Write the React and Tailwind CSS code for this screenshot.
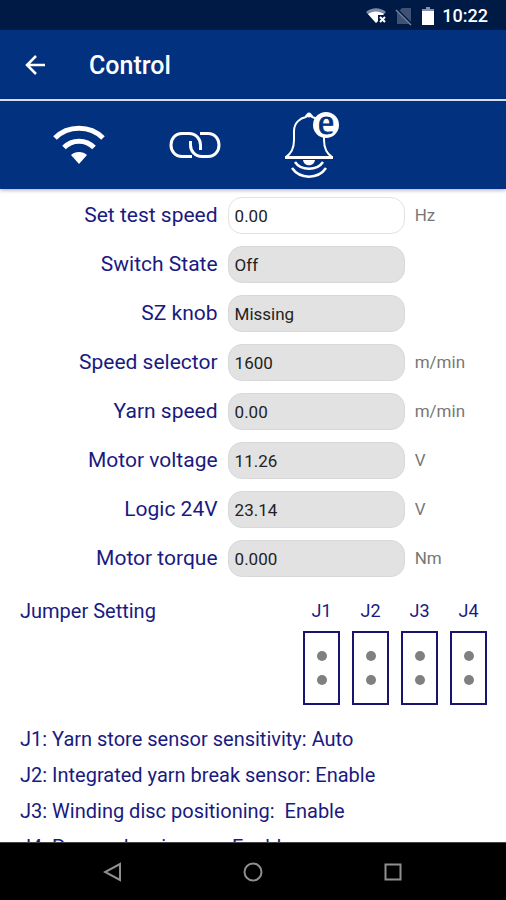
import { useState } from 'react';

const readings = [
  { id: 'switch-state', label: 'Switch State', value: 'Off' },
  { id: 'sz-knob', label: 'SZ knob', value: 'Missing' },
  { id: 'speed-selector', label: 'Speed selector', value: '1600', unit: 'm/min' },
  { id: 'yarn-speed', label: 'Yarn speed', value: '0.00', unit: 'm/min' },
  { id: 'motor-voltage', label: 'Motor voltage', value: '11.26', unit: 'V' },
  { id: 'logic-24v', label: 'Logic 24V', value: '23.14', unit: 'V' },
  { id: 'motor-torque', label: 'Motor torque', value: '0.000', unit: 'Nm' },
];

const jumpers = ['J1', 'J2', 'J3', 'J4'];

const jumperNotes = [
  'J1: Yarn store sensor sensitivity: Auto',
  'J2: Integrated yarn break sensor: Enable',
  'J3: Winding disc positioning:  Enable',
  'J4: Power cleaning run: Enable',
];

function StatusBar() {
  return (
    <div className="flex h-[30px] shrink-0 items-center justify-end bg-[#001a46] pt-0.5 pr-[18px] text-white">
      <svg className="mr-2 h-5 w-5" viewBox="0 0 20 20">
        <path d="M0 6C6 1 14 1 20 6L17 9H12V15L10 17Z" fill="#7d8ba6" />
        <path d="M2 8C7 4.500 13 4.500 18 8L17 9H12V15L10 17Z" fill="#fff" />
        <path d="M14 11l5 5M19 11l-5 5" stroke="#fff" strokeWidth="2" />
      </svg>
      <svg className="mr-2 h-5 w-5" viewBox="0 0 20 20">
        <path d="M8 2h9v16H3V7Z" fill="#3f5275" />
        <path d="M2 3l15 15" stroke="#001a46" strokeWidth="3" />
        <path d="M2 4l15 15" stroke="#7685a0" strokeWidth="1.500" />
      </svg>
      <svg className="mr-2 h-5 w-3" viewBox="0 0 12 20">
        <path d="M4 1h4v2h4v3H0V3h4Z" fill="#8592aa" />
        <path d="M0 5h12v14H0Z" fill="#fff" />
      </svg>
      <span className="text-lg font-medium">10:22</span>
    </div>
  );
}

function WifiIcon() {
  return (
    <svg className="h-10 w-[52px]" viewBox="0 0 52 40" fill="none" stroke="#fff" strokeWidth="5">
      <path d="M2 13C15 0 37 0 50 13" />
      <path d="M11 22.500C19 14 33 14 41 22.500" />
      <path d="M18 30C22 26 30 26 34 30L26 39Z" fill="#fff" stroke="none" />
    </svg>
  );
}

function LinkIcon() {
  return (
    <svg className="h-7 w-[52px]" viewBox="0 0 52 28" fill="none" stroke="#fff" strokeWidth="3">
      <path d="M23 25.500H13C6 25.500 2 20 2 14S6 2.500 13 2.500H20C27 2.500 31.500 8 31.500 14V19" />
      <path d="M31 2.500H39C46 2.500 50 8 50 14S46 25.500 39 25.500H33C26 25.500 21.500 20 21.500 14V10" />
    </svg>
  );
}

function BellIcon() {
  return (
    <svg className="h-[68px] w-[56px] overflow-visible" viewBox="0 -1 56 68" fill="none" stroke="#fff" strokeWidth="2">
      <path
        d="M1 45C7 41 9 36 9 28V19C9 11 15 6 21 5C21 2 27 2 27 5C33 6 39 11 39 19V28C39 36 41 41 47 45Z"
        strokeLinejoin="round"
      />
      <circle cx="24" cy="3" r="2.500" fill="#fff" stroke="none" />
      <path d="M0 45.500H48" strokeWidth="3" />
      <path d="M18 48H30C29 55 19 55 18 48Z" fill="#fff" stroke="none" />
      <path d="M10 50C16 59 32 59 38 50" strokeWidth="2.500" />
      <path d="M7 56C15 67.500 33 67.500 41 56" strokeWidth="2.500" />
      <circle cx="41" cy="13" r="13" fill="#fff" stroke="none" />
      <text
        x="41"
        y="22"
        textAnchor="middle"
        fill="#02317f"
        stroke="#02317f"
        strokeWidth="0.800"
        fontSize="36"
        fontFamily="Liberation Sans Narrow, Liberation Serif, serif"
      >
        e
      </text>
    </svg>
  );
}

function Row({ id, label, unit, children }) {
  return (
    <div className="flex h-[37px] items-center">
      <label htmlFor={id} className="w-[43%] text-right text-[21px] text-[#1a1a80]">
        {label}
      </label>
      <div className="ml-[10px] w-[35%]">{children}</div>
      <span className="ml-[10px] text-[17px] text-[#777]">{unit}</span>
    </div>
  );
}

export default function App() {
  const [testSpeed, setTestSpeed] = useState('0.00');

  return (
    <div className="flex h-screen flex-col bg-white font-[Roboto,sans-serif]">
      <StatusBar />

      <header className="shrink-0 bg-[#02317f] text-white">
        <div className="flex h-[69px] items-center pl-6">
          <button type="button" aria-label="Back">
            <svg className="h-[22px] w-[22px]" viewBox="0 0 22 22" fill="none" stroke="#fff" strokeWidth="2.500">
              <path d="M21 11H3M12 2L3 11L12 20" />
            </svg>
          </button>
          <h1 className="ml-[43px] pt-0.5 text-[25px] font-medium">Control</h1>
        </div>
      </header>

      <nav className="relative flex h-[90px] shrink-0 items-center border-t-2 border-[#d5dcf0] bg-[#02317f] pl-[53px] shadow-[0_1px_4px_rgba(40,20,90,0.4)]">
        <button type="button" aria-label="Wi-Fi">
          <WifiIcon />
        </button>
        <button type="button" aria-label="Link" className="ml-16">
          <LinkIcon />
        </button>
        <button type="button" aria-label="Alarm" className="ml-16">
          <BellIcon />
        </button>
      </nav>

      <main className="min-h-0 flex-1 overflow-hidden pt-2">
        <div className="flex flex-col gap-3">
          <Row id="test-speed" label="Set test speed" unit="Hz">
            <input
              id="test-speed"
              value={testSpeed}
              onChange={(e) => setTestSpeed(e.target.value)}
              className="h-[37px] w-full rounded-[14px] border border-[#e2e2e2] bg-white px-[6px] text-[17px] text-[#222]"
            />
          </Row>
          {readings.map(({ id, label, value, unit }) => (
            <Row key={id} id={id} label={label} unit={unit}>
              <input
                id={id}
                value={value}
                readOnly
                className="h-[37px] w-full rounded-[14px] border border-[#d8d8d8] bg-[#e2e2e2] px-[6px] text-[17px] text-[#222]"
              />
            </Row>
          ))}
        </div>

        <section className="mt-5 flex justify-between pr-[19px] pl-5 text-[#1a1a80]">
          <h2 className="text-xl leading-7">Jumper Setting</h2>
          <div className="flex gap-3">
            {jumpers.map((name) => (
              <div key={name} className="flex w-[37px] flex-col items-center">
                <span className="text-lg">{name}</span>
                <div className="mt-[6px] flex h-[74px] w-full flex-col items-center justify-center gap-[14px] border-2 border-[#1a1470]">
                  <span className="size-[10px] rounded-full bg-[#808080]" />
                  <span className="size-[10px] rounded-full bg-[#808080]" />
                </div>
              </div>
            ))}
          </div>
        </section>

        <ul className="mt-4 pl-5 text-xl leading-9 whitespace-pre text-[#1a1a80]">
          {jumperNotes.map((note) => (
            <li key={note}>{note}</li>
          ))}
        </ul>
      </main>

      <footer className="flex h-[58px] shrink-0 items-center justify-center gap-[120px] border-t border-[#444] bg-black">
        <button type="button" aria-label="Back">
          <svg className="size-5" viewBox="0 0 20 20" fill="none" stroke="#8f8f8f" strokeWidth="2">
            <path d="M17 2V18L2 10Z" />
          </svg>
        </button>
        <button type="button" aria-label="Home">
          <svg className="size-5" viewBox="0 0 20 20" fill="none" stroke="#8f8f8f" strokeWidth="2">
            <circle cx="10" cy="10" r="8.500" />
          </svg>
        </button>
        <button type="button" aria-label="Recent apps">
          <svg className="size-5" viewBox="0 0 20 20" fill="none" stroke="#8f8f8f" strokeWidth="2">
            <path d="M2.500 2.500H17.500V17.500H2.500Z" />
          </svg>
        </button>
      </footer>
    </div>
  );
}
